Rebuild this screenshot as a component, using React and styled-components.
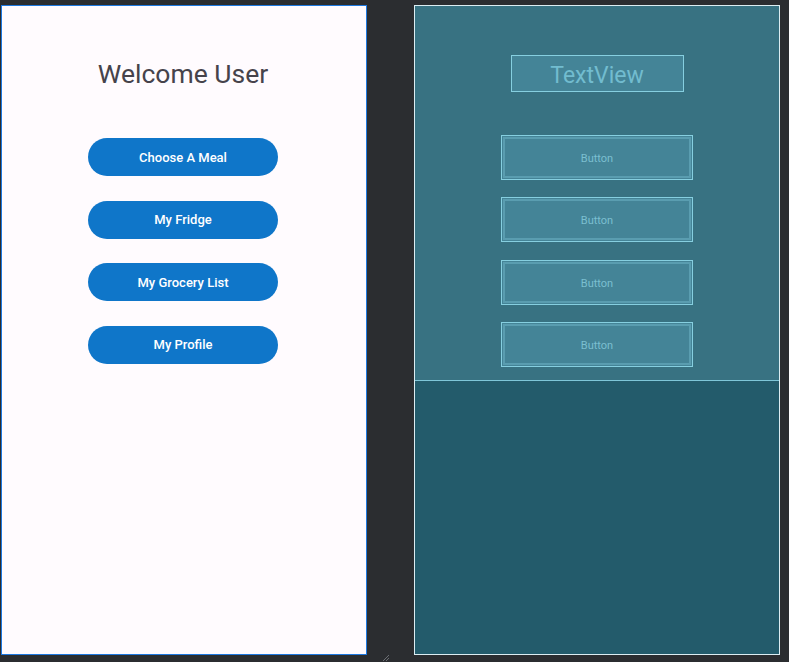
import styled, { createGlobalStyle } from "styled-components"

const GlobalStyle = createGlobalStyle`
body{
    margin:0;
    background:#2b2d30;
    font-family: Roboto, "Liberation Sans", sans-serif;
}
`

const menu = ["Choose A Meal", "My Fridge", "My Grocery List", "My Profile"]

const App = () => {
    return (
        <>
            <GlobalStyle />
            <Stage>
                <Phone>
                    <Title>Welcome User</Title>
                    <Menu $gap={24.5}>
                        {menu.map((item) => (
                            <PillButton key={item}>{item}</PillButton>
                        ))}
                    </Menu>
                </Phone>
                <Blueprint>
                    <Layout>
                        <GhostText>TextView</GhostText>
                        <Menu $gap={17.3} $top={43}>
                            {menu.map((item) => (
                                <GhostButton key={item}>
                                    <span>Button</span>
                                </GhostButton>
                            ))}
                        </Menu>
                    </Layout>
                </Blueprint>
                <Grip width="8" height="8" viewBox="0 0 8 8">
                    <path d="M1 7 L7 1 M4 7 L7 4" stroke="#6b6e73" strokeWidth="1" />
                </Grip>
            </Stage>
        </>
    )
}

const Stage = styled.div`
position:relative;
display:flex;
gap:47px;
padding:5px 0 0 1px;
height:662px;
box-sizing:border-box;
`

const Phone = styled.div`
width:366px;
height:650px;
box-sizing:border-box;
border:1px solid #1d78e0;
padding-right:2px;
background:#fffbfe;
display:flex;
flex-direction:column;
align-items:center;
`

const Title = styled.h1`
margin:53px 0 0;
font-size:26.5px;
line-height:30px;
font-weight:400;
color:#46434b;
`

const Menu = styled.div`
display:flex;
flex-direction:column;
align-items:center;
gap:${(p) => p.$gap || 25}px;
margin-top:${(p) => p.$top || 49}px;
`

const PillButton = styled.div`
width:190px;
height:38px;
border-radius:19px;
background:#0f76c9;
color:#fff;
font-size:13px;
font-weight:500;
display:flex;
align-items:center;
justify-content:center;
`

const Blueprint = styled.div`
width:366px;
height:650px;
box-sizing:border-box;
border:1px solid #dcedf2;
background:#235b6b;
`

const Layout = styled.div`
height:375px;
box-sizing:border-box;
background:#387282;
border-bottom:1px solid #7fc6d8;
display:flex;
flex-direction:column;
align-items:center;
padding-top:49px;
`

const GhostText = styled.div`
width:173px;
height:37px;
box-sizing:border-box;
border:1px solid #86cfe0;
background:#448497;
color:#72bccf;
font-size:23px;
padding-top:3px;
display:flex;
align-items:center;
justify-content:center;
`

const GhostButton = styled.div`
width:192px;
height:45px;
box-sizing:border-box;
border:1px solid #86cfe0;
background:#448497;
padding:1px;
display:flex;
span{
    flex:1;
    border:2px solid #5a9db0;
    padding-top:2px;
    display:flex;
    align-items:center;
    justify-content:center;
    color:#7bbfd0;
    font-size:11px;
}
`

const Grip = styled.svg`
position:absolute;
left:382px;
top:654px;
`

export default App
